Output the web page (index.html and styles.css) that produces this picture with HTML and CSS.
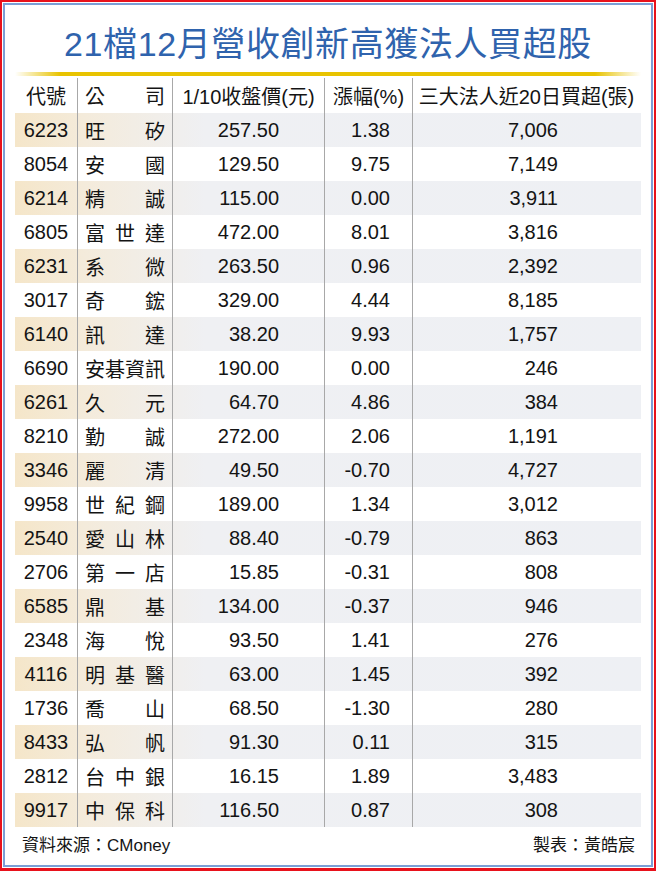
FILE: index.html
```html
<!DOCTYPE html>
<html lang="zh-Hant">
<head>
<meta charset="utf-8">
<link rel="stylesheet" href="styles.css">
</head>
<body>
<div class="frame">
  <div class="inner">
    <h1 class="title">21檔12月營收創新高獲法人買超股</h1>
    <div class="rule"></div>
    <div class="table">
      <div class="row head">
        <div class="c code">代號</div>
        <div class="c name"><span>公</span><span>司</span></div>
        <div class="c ctr">1/10收盤價(元)</div>
        <div class="c ctr">漲幅(%)</div>
        <div class="c ctr">三大法人近20日買超(張)</div>
      </div>
      <div class="row alt"><div class="c code">6223</div><div class="c name"><span>旺</span><span>矽</span></div><div class="c price">257.50</div><div class="c chg">1.38</div><div class="c vol">7,006</div></div>
      <div class="row"><div class="c code">8054</div><div class="c name"><span>安</span><span>國</span></div><div class="c price">129.50</div><div class="c chg">9.75</div><div class="c vol">7,149</div></div>
      <div class="row alt"><div class="c code">6214</div><div class="c name"><span>精</span><span>誠</span></div><div class="c price">115.00</div><div class="c chg">0.00</div><div class="c vol">3,911</div></div>
      <div class="row"><div class="c code">6805</div><div class="c name"><span>富</span><span>世</span><span>達</span></div><div class="c price">472.00</div><div class="c chg">8.01</div><div class="c vol">3,816</div></div>
      <div class="row alt"><div class="c code">6231</div><div class="c name"><span>系</span><span>微</span></div><div class="c price">263.50</div><div class="c chg">0.96</div><div class="c vol">2,392</div></div>
      <div class="row"><div class="c code">3017</div><div class="c name"><span>奇</span><span>鋐</span></div><div class="c price">329.00</div><div class="c chg">4.44</div><div class="c vol">8,185</div></div>
      <div class="row alt"><div class="c code">6140</div><div class="c name"><span>訊</span><span>達</span></div><div class="c price">38.20</div><div class="c chg">9.93</div><div class="c vol">1,757</div></div>
      <div class="row"><div class="c code">6690</div><div class="c name"><span>安</span><span>碁</span><span>資</span><span>訊</span></div><div class="c price">190.00</div><div class="c chg">0.00</div><div class="c vol">246</div></div>
      <div class="row alt"><div class="c code">6261</div><div class="c name"><span>久</span><span>元</span></div><div class="c price">64.70</div><div class="c chg">4.86</div><div class="c vol">384</div></div>
      <div class="row"><div class="c code">8210</div><div class="c name"><span>勤</span><span>誠</span></div><div class="c price">272.00</div><div class="c chg">2.06</div><div class="c vol">1,191</div></div>
      <div class="row alt"><div class="c code">3346</div><div class="c name"><span>麗</span><span>清</span></div><div class="c price">49.50</div><div class="c chg">-0.70</div><div class="c vol">4,727</div></div>
      <div class="row"><div class="c code">9958</div><div class="c name"><span>世</span><span>紀</span><span>鋼</span></div><div class="c price">189.00</div><div class="c chg">1.34</div><div class="c vol">3,012</div></div>
      <div class="row alt"><div class="c code">2540</div><div class="c name"><span>愛</span><span>山</span><span>林</span></div><div class="c price">88.40</div><div class="c chg">-0.79</div><div class="c vol">863</div></div>
      <div class="row"><div class="c code">2706</div><div class="c name"><span>第</span><span>一</span><span>店</span></div><div class="c price">15.85</div><div class="c chg">-0.31</div><div class="c vol">808</div></div>
      <div class="row alt"><div class="c code">6585</div><div class="c name"><span>鼎</span><span>基</span></div><div class="c price">134.00</div><div class="c chg">-0.37</div><div class="c vol">946</div></div>
      <div class="row"><div class="c code">2348</div><div class="c name"><span>海</span><span>悅</span></div><div class="c price">93.50</div><div class="c chg">1.41</div><div class="c vol">276</div></div>
      <div class="row alt"><div class="c code">4116</div><div class="c name"><span>明</span><span>基</span><span>醫</span></div><div class="c price">63.00</div><div class="c chg">1.45</div><div class="c vol">392</div></div>
      <div class="row"><div class="c code">1736</div><div class="c name"><span>喬</span><span>山</span></div><div class="c price">68.50</div><div class="c chg">-1.30</div><div class="c vol">280</div></div>
      <div class="row alt"><div class="c code">8433</div><div class="c name"><span>弘</span><span>帆</span></div><div class="c price">91.30</div><div class="c chg">0.11</div><div class="c vol">315</div></div>
      <div class="row"><div class="c code">2812</div><div class="c name"><span>台</span><span>中</span><span>銀</span></div><div class="c price">16.15</div><div class="c chg">1.89</div><div class="c vol">3,483</div></div>
      <div class="row alt"><div class="c code">9917</div><div class="c name"><span>中</span><span>保</span><span>科</span></div><div class="c price">116.50</div><div class="c chg">0.87</div><div class="c vol">308</div></div>
    </div>
    <div class="footer">
      <span>資料來源：CMoney</span>
      <span>製表：黃皓宸</span>
    </div>
  </div>
</div>
</body>
</html>
```

FILE: styles.css
```css
html, body {
  margin: 0;
  padding: 0;
  background: #fff;
}
body {
  width: 656px;
  height: 871px;
  font-family: "Liberation Sans", "Noto Sans CJK TC", sans-serif;
  color: #141414;
}
.frame {
  box-sizing: border-box;
  width: 656px;
  height: 871px;
  border: 2px solid #e8121c;
  border-bottom-width: 3px;
  padding: 1px;
}
.inner {
  box-sizing: border-box;
  height: 100%;
  border: 2px solid #7b9fd6;
  padding: 0 10px;
  display: flex;
  flex-direction: column;
}
.title {
  margin: 0;
  height: 67px;
  box-sizing: border-box;
  padding-top: 6px;
  display: flex;
  align-items: center;
  justify-content: center;
  font-size: 34px;
  font-weight: normal;
  letter-spacing: 0.6px;
  color: #2f63ad;
}
.rule {
  height: 4px;
  background: linear-gradient(to right, rgba(232,192,0,0) 0, #e8c300 45px, #e8c300 580px, rgba(232,192,0,0) 100%);
}
.table {
  margin-top: 2px;
}
.row {
  display: grid;
  grid-template-columns: 62px 95px 152px 88px 228px;
  height: 34px;
  font-size: 20px;
}
.row.head {
  height: 35px;
}
.row.alt {
  background: linear-gradient(to right, #f5e6c9 0, #f4ebdb 70px, #eff0f3 190px, #eef0f4 100%);
}
.c {
  display: flex;
  align-items: center;
  border-left: 1px solid #a8a8a8;
  box-sizing: border-box;
  white-space: nowrap;
}
.c.code {
  border-left: none;
  justify-content: center;
}
.c.name {
  justify-content: space-between;
  padding: 0 7px 0 7px;
}
.c.ctr {
  justify-content: center;
}
.c.price {
  justify-content: flex-end;
  padding-right: 45px;
}
.c.chg {
  justify-content: flex-end;
  padding-right: 22px;
}
.c.vol {
  justify-content: flex-end;
  padding-right: 82px;
}
.footer {
  display: flex;
  justify-content: space-between;
  align-items: center;
  height: 32px;
  padding: 0 6px 0 7px;
  font-size: 17px;
}
```
